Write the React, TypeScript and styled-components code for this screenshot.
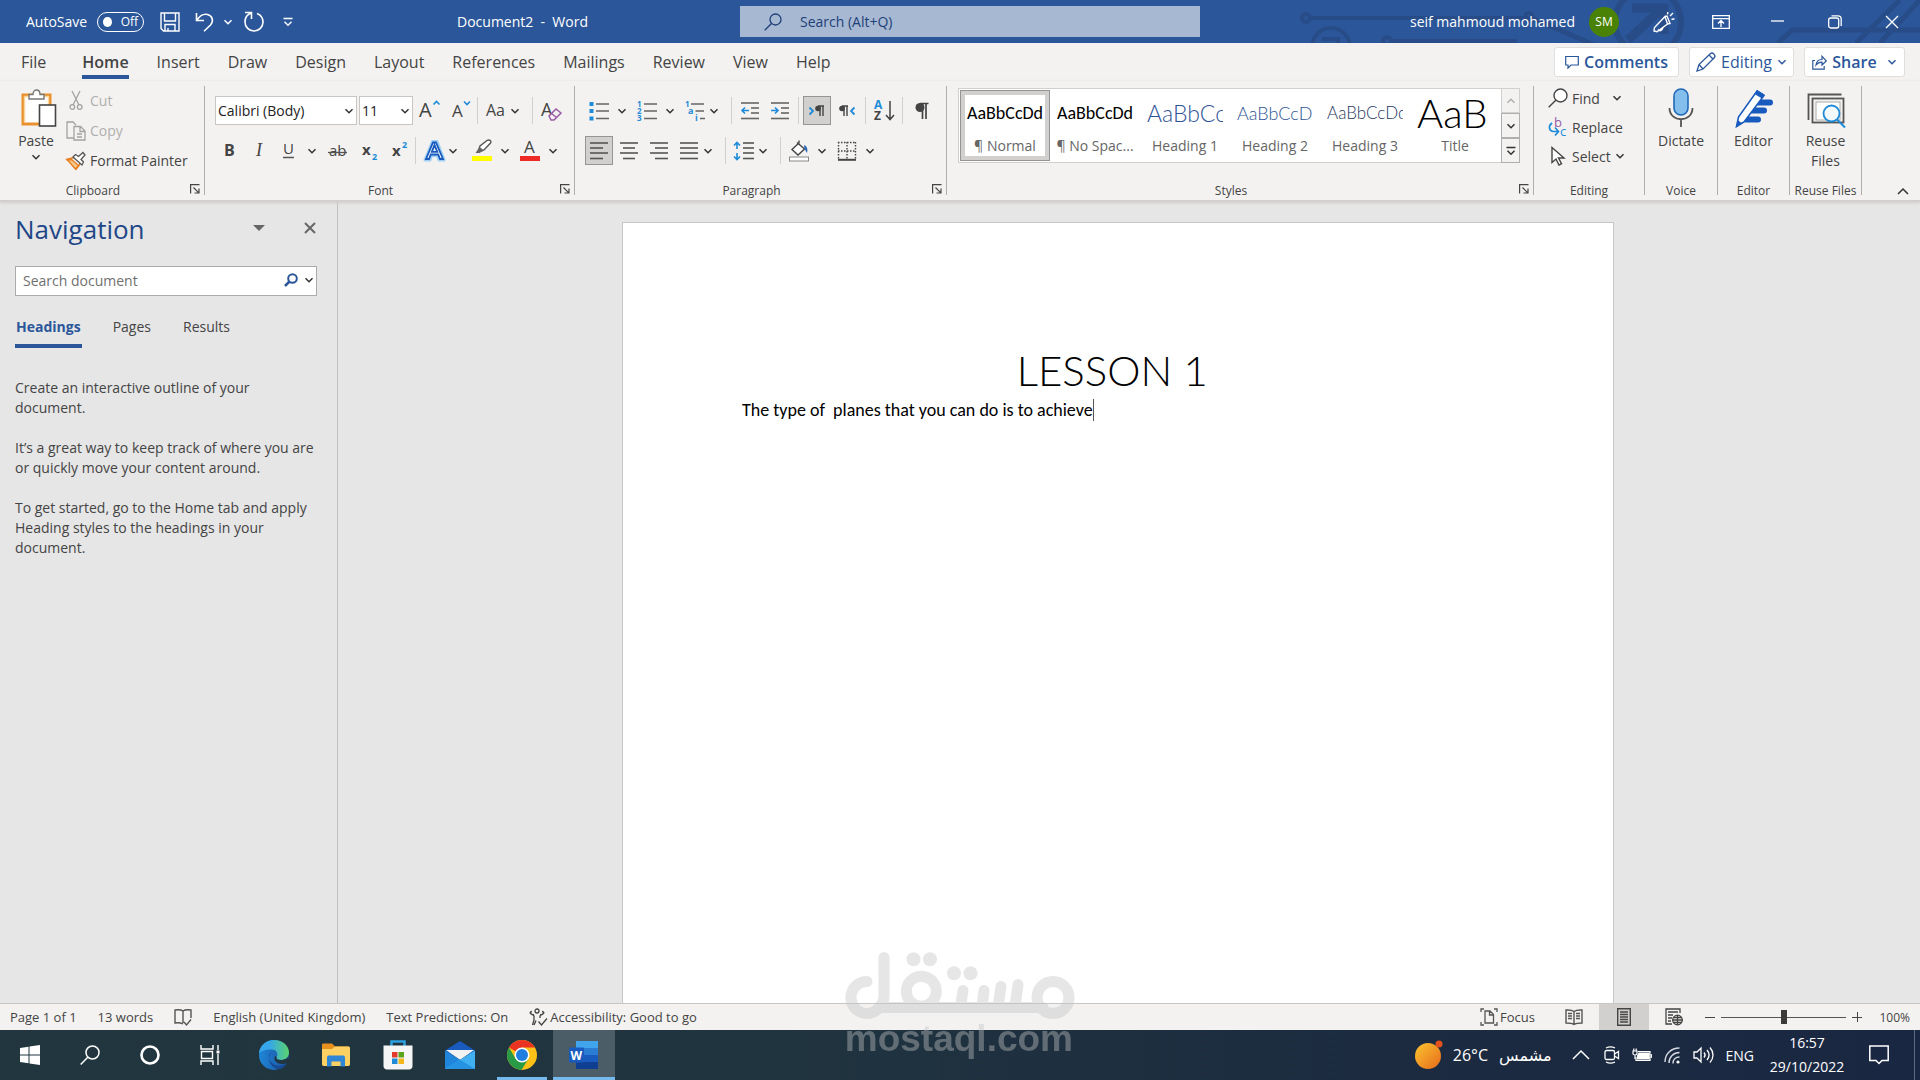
import React from "react";
import styled, { createGlobalStyle } from "styled-components";

const UI = `"Open Sans", "Noto Sans", sans-serif`;
const BODY = `Carlito, Lato, sans-serif`;
const DISPLAY = `Lato, Carlito, sans-serif`;
const C = {
  brand: "#2b579a",
  ribbon: "#f3f2f1",
  text: "#444444",
  blue: "#1e8bd8",
  canvas: "#e6e6e6",
  line: "#c6c6c6",
};

const Global = createGlobalStyle`
  *, *::before, *::after { box-sizing: border-box; }
  html, body, #root { height: 100%; margin: 0; }
  body { font-family: ${UI}; font-size: 14px; color: ${C.text}; overflow: hidden; }
  button, input, select { font: inherit; color: inherit; margin: 0; padding: 0; border: 0; background: none; outline: none; }
  svg { display: block; flex: none; overflow: visible; }
  p, h1, h2 { margin: 0; font-weight: 400; }
`;

const Window = styled.div`
  display: flex;
  flex-direction: column;
  height: 100vh;
  background: ${C.canvas};
`;

/* ---------- small drawings ---------- */

type IconProps = { w: number; h?: number; vb?: string; sw?: number; color?: string; children: React.ReactNode };
const Icon = ({ w, h = w, vb, sw = 1, color = "#555", children }: IconProps) => (
  <svg width={w} height={h} viewBox={vb || `0 0 ${w} ${h}`} fill="none" stroke={color} strokeWidth={sw} aria-hidden="true">
    {children}
  </svg>
);
const Chevron = ({ color = "#333", up = false }: { color?: string; up?: boolean }) => (
  <Icon w={10} h={6} color={color} sw={1.5}>
    <path d={up ? "M1.5 4.7 5 1.3l3.5 3.4" : "M1.5 1.2 5 4.7l3.5-3.5"} />
  </Icon>
);

/* ---------- title bar ---------- */

const TitleBar = styled.header`
  position: relative;
  display: grid;
  grid-template-columns: 37fr 23fr 36fr;
  align-items: center;
  height: 43px;
  flex: none;
  background: ${C.brand};
  color: #fff;
`;
const Circuit = styled.svg`
  position: absolute;
  top: 0;
  right: 0;
  overflow: hidden;
`;
const TitleLeft = styled.div`
  display: flex;
  align-items: center;
  padding: 0 152px 0 26px;
`;
const AutoSave = styled.label`
  display: flex;
  align-items: center;
  gap: 10px;
  margin-right: 8px;
`;
const Toggle = styled.button`
  display: flex;
  align-items: center;
  gap: 9px;
  width: 47px;
  height: 20px;
  padding: 0 5px;
  border: 1px solid #fff;
  border-radius: 10px;
  font-size: 12px;
`;
const Knob = styled.span`
  width: 10px;
  height: 10px;
  border-radius: 50%;
  background: #fff;
`;
const QuickButton = styled.button<{ $w: number }>`
  display: flex;
  justify-content: center;
  align-items: center;
  width: ${(p) => p.$w}px;
  height: 32px;
`;
const DocName = styled.div`
  margin-left: auto;
  white-space: pre;
`;
const SearchBox = styled.label`
  display: flex;
  align-items: center;
  gap: 18px;
  height: 31px;
  padding: 0 24px;
  background: #a6b8d2;
  input {
    flex: 1;
    min-width: 0;
    color: #1f3f77;
  }
  input::placeholder {
    color: #1f3f77;
    opacity: 1;
  }
`;
const TitleRight = styled.div`
  position: relative;
  display: flex;
  justify-content: flex-end;
  align-items: center;
`;
const Avatar = styled.span`
  display: grid;
  place-items: center;
  width: 30px;
  height: 30px;
  margin: 0 16px 0 14px;
  border-radius: 50%;
  background: #498205;
  font-size: 12px;
`;
const WindowButton = styled.button`
  display: grid;
  place-items: center;
  width: 57px;
  height: 43px;
`;

const Title = () => (
  <TitleBar>
    <Circuit width="660" height="43" viewBox="1260 0 660 43" fill="none" stroke="#284c88" strokeWidth="4" aria-hidden="true">
      <circle cx="1306" cy="18" r="4" />
      <path d="M1310 18h220l66 28" />
      <circle cx="1331" cy="47" r="19" />
      <path d="M1322 39h16v8" />
      <circle cx="1387" cy="41" r="4" />
      <path d="M1391 41h126" />
      <circle cx="1529" cy="17" r="4" />
      <path d="M1533 18l60 26" />
      <circle cx="1648" cy="22" r="33" strokeWidth="6" />
      <path d="M1628 40 1660 10M1632 8h32v26" strokeWidth="9" />
      <path d="M1778 43l14-13h128M1856 43l44-43M1880 43l40-43" strokeWidth="5" />
    </Circuit>
    <TitleLeft>
      <AutoSave htmlFor="autosave">
        AutoSave
        <Toggle id="autosave" type="button" role="switch" aria-checked="false">
          <Knob />
          Off
        </Toggle>
      </AutoSave>
      <QuickButton $w={36} aria-label="Save">
        <Icon w={20} color="#fff" sw={1.4}>
          <path d="M1 1h18v18H3.500L1 16.500zM4.500 1v8h11V1M5 19v-6.500h10V19M8 19v-3" />
        </Icon>
      </QuickButton>
      <QuickButton $w={34} aria-label="Undo">
        <Icon w={20} color="#fff" sw={1.6}>
          <path d="M1.500 1v7.500H9M2 8c3-4.500 6.500-6.500 10.500-5.500 5 1.300 6.500 6.500 3 10.500L9 19.300" />
        </Icon>
      </QuickButton>
      <QuickButton $w={12} aria-label="Undo list">
        <Chevron color="#fff" />
      </QuickButton>
      <QuickButton $w={40} aria-label="Redo">
        <Icon w={22} color="#fff" sw={1.6}>
          <path d="M2 1.500h6.500V8M8.300 2C4 3.500 2 7 2 11c0 5 4 9 9 9s9-4 9-9c0-4-2.200-7-6-8.500" />
        </Icon>
      </QuickButton>
      <QuickButton $w={28} aria-label="Customise toolbar">
        <Icon w={10} h={10} color="#fff" sw={1.4}>
          <path d="M.5 1.500h9M1.500 4.800 5 8.200l3.500-3.400" />
        </Icon>
      </QuickButton>
      <DocName>Document2  -  Word</DocName>
    </TitleLeft>
    <SearchBox>
      <Icon w={18} color="#1f3f77" sw={1.3}>
        <circle cx="11.500" cy="6.500" r="5.500" />
        <path d="M7.500 10.500.7 17.300" />
      </Icon>
      <input aria-label="Search" placeholder="Search (Alt+Q)" />
    </SearchBox>
    <TitleRight>
      seif mahmoud mohamed
      <Avatar>SM</Avatar>
      <WindowButton aria-label="Coming soon">
        <Icon w={22} color="#fff" sw={1.4}>
          <path d="M12 5.500 1.500 16.500 1 20l3 .8L14.500 13zM14.500 13 17 12.500 14 5 12 5.500M5 18.500c1.500 2 4 1.500 5-2M14.500 3.500l.3-2.500M17 5l3-3M18.500 8.500l3-.8" />
        </Icon>
      </WindowButton>
      <WindowButton aria-label="Ribbon display options">
        <Icon w={18} h={14} color="#fff" sw={1.3}>
          <path d="M.7.7h16.600v12.600H.7zM.7 3.700h16.600M9 12V6M6 8.500l3-3 3 3" />
        </Icon>
      </WindowButton>
      <WindowButton aria-label="Minimise">
        <Icon w={13} h={13} color="#fff" sw={1.3}>
          <path d="M0 6h13" />
        </Icon>
      </WindowButton>
      <WindowButton aria-label="Restore">
        <Icon w={14} color="#fff" sw={1.3}>
          <rect x=".7" y="3" width="10" height="10" rx="2" />
          <path d="M3.500.8H10c2 0 3.200 1.200 3.200 3.200V11" />
        </Icon>
      </WindowButton>
      <WindowButton aria-label="Close">
        <Icon w={14} color="#fff" sw={1.3}>
          <path d="M1 1l12 12M13 1 1 13" />
        </Icon>
      </WindowButton>
    </TitleRight>
  </TitleBar>
);

/* ---------- ribbon tabs ---------- */

const TabRow = styled.nav`
  display: flex;
  align-items: flex-start;
  height: 38px;
  flex: none;
  padding: 4px 15px 0 7px;
  background: ${C.ribbon};
`;
const Tab = styled.button<{ $active?: boolean }>`
  height: 32px;
  margin: 0 14px;
  padding-top: 2px;
  border-bottom: 4px solid ${(p) => (p.$active ? C.brand : "transparent")};
  font-size: 16px;
  line-height: 24px;
  font-weight: ${(p) => (p.$active ? 600 : 400)};
  &:first-child {
    margin-right: 22px;
  }
`;
const TabActions = styled.div`
  display: flex;
  gap: 10px;
  margin-left: auto;
`;
const ActionButton = styled.button<{ $w: number; $bold?: boolean }>`
  display: flex;
  justify-content: center;
  align-items: center;
  gap: 5px;
  width: ${(p) => p.$w}px;
  height: 30px;
  border: 1px solid #e1dfdd;
  border-radius: 3px;
  background: #fff;
  color: ${C.brand};
  font-size: 16px;
  font-weight: ${(p) => (p.$bold ? 600 : 400)};
`;
const tabs = ["File", "Home", "Insert", "Draw", "Design", "Layout", "References", "Mailings", "Review", "View", "Help"];

const Tabs = () => (
  <TabRow>
    {tabs.map((t) => (
      <Tab key={t} $active={t === "Home"}>
        {t}
      </Tab>
    ))}
    <TabActions>
      <ActionButton $w={125} $bold>
        <Icon w={14} color={C.brand} sw={1.2}>
          <path d="M.7 1.500h12.600v8.500H6L3 13v-3H.7z" />
        </Icon>
        Comments
      </ActionButton>
      <ActionButton $w={105}>
        <Icon w={20} color={C.brand} sw={1.3}>
          <path d="M1 19l2-6.500L14.500 1.500c2-1.500 5.500 1.500 4 4L7 17zM3 12.500 7 17M13 3l4.500 4.500" />
        </Icon>
        Editing
        <Chevron color={C.brand} />
      </ActionButton>
      <ActionButton $w={101} $bold>
        <Icon w={15} color={C.brand} sw={1.2}>
          <path d="M3 5.500H.8v8.700h11.400V11M4 10c.5-4 2.500-5.500 6-5.500V1.200L14.300 6 10 10V7.200C7.500 7.200 5.500 8 4 10z" />
        </Icon>
        Share
        <span />
        <Chevron color={C.brand} />
      </ActionButton>
    </TabActions>
  </TabRow>
);

/* ---------- ribbon body ---------- */

const Ribbon = styled.section`
  display: flex;
  flex: none;
  height: 121px;
  padding: 5px 0 5px;
  background: ${C.ribbon};
  border-bottom: 2px solid #d2d0ce;
  box-shadow: 0 1px 3px #cfcdcb;
  z-index: 1;
`;
const GroupBox = styled.div<{ $w?: number }>`
  display: flex;
  flex-direction: column;
  ${(p) => (p.$w ? `width: ${p.$w}px; flex: none;` : "flex: 1; min-width: 0;")}
  border-right: 1px solid #b1afad;
`;
const GroupMain = styled.div<{ $pad: string }>`
  flex: 1;
  min-height: 0;
  display: flex;
  padding: ${(p) => p.$pad};
`;
const GroupFoot = styled.div`
  display: flex;
  height: 16px;
  margin-bottom: -4px;
  font-size: 12px;
  line-height: 16px;
  white-space: nowrap;
  span {
    flex: 1;
    text-align: center;
  }
`;
const Launcher = styled.button`
  display: grid;
  place-items: center;
  width: 18px;
  height: 11px;
`;
const Group = ({ name, w, pad, launch, children }: { name: string; w?: number; pad: string; launch?: boolean; children: React.ReactNode }) => (
  <GroupBox $w={w}>
    <GroupMain $pad={pad}>{children}</GroupMain>
    <GroupFoot>
      <span>{name}</span>
      {launch && (
        <Launcher aria-label={`${name} settings`}>
          <Icon w={10} color="#444" sw={1.2}>
            <path d="M.6 9.500V.6h8.900M3.500 3.500 8.800 8.800M9 4.500V9H4.500" />
          </Icon>
        </Launcher>
      )}
    </GroupFoot>
  </GroupBox>
);

const BigButton = styled.button<{ $w: number }>`
  display: flex;
  flex-direction: column;
  align-items: center;
  gap: 3px;
  width: ${(p) => p.$w}px;
  line-height: 20px;
`;
const Column = styled.div<{ $row: number }>`
  display: flex;
  flex-direction: column;
  align-items: flex-start;
  button {
    height: ${(p) => p.$row}px;
  }
`;
const LineButton = styled.button`
  display: flex;
  align-items: center;
  gap: 4px;
  padding-bottom: 5px;
  white-space: nowrap;
  &:disabled {
    color: #b1afad;
  }
`;
const IconSlot = styled.span`
  display: grid;
  place-items: center;
  width: 20px;
`;
const Rows = styled.div`
  display: flex;
  flex-direction: column;
  gap: 11px;
`;
const Row = styled.div`
  display: flex;
  gap: 2px;
  height: 29px;
`;
const Tool = styled.button<{ $on?: boolean }>`
  display: grid;
  place-items: center;
  width: 28px;
  height: 29px;
  flex: none;
  border: 1px solid ${(p) => (p.$on ? "#979593" : "transparent")};
  background: ${(p) => (p.$on ? "#d2d0ce" : "transparent")};
`;
const Split = styled.div`
  display: flex;
`;
const Drop = styled.button<{ $tight?: boolean }>`
  display: flex;
  align-items: center;
  justify-content: ${(p) => (p.$tight ? "flex-start" : "center")};
  width: 18px;
`;
const Sep = styled.i`
  width: 1px;
  height: 27px;
  margin: 1px 2px;
  background: #d2d0ce;
`;
const Combo = styled.label<{ $w: number }>`
  display: flex;
  align-items: center;
  width: ${(p) => p.$w}px;
  padding: 0 2px 0 2px;
  border: 1px solid #c8c6c4;
  background: #fff;
  color: #222;
  select {
    flex: 1;
    min-width: 0;
    height: 27px;
    appearance: none;
  }
`;
const T = ({ x, y, s, f = "#444", b, i, children }: { x: number; y: number; s: number; f?: string; b?: boolean; i?: boolean; children: React.ReactNode }) => (
  <text x={x} y={y} fontSize={s} fill={f} stroke="none" fontWeight={b ? 700 : 400} fontStyle={i ? "italic" : "normal"} fontFamily={i ? "Liberation Serif, serif" : UI}>
    {children}
  </text>
);

const DropTool = ({ label, tight, children }: { label: string; tight?: boolean; children: React.ReactNode }) => (
  <Split>
    <Tool aria-label={label}>{children}</Tool>
    <Drop $tight={tight} aria-label={`${label} options`}>
      <Chevron />
    </Drop>
  </Split>
);

const lines = (segs: number[][]) => segs.map(([x1, x2, y], i) => <path key={i} d={`M${x1} ${y}H${x2}`} />);

const Clipboard = () => (
  <Group name="Clipboard" w={205} pad="2px 0 0 6px" launch>
    <BigButton $w={60}>
      <Icon w={36} h={40} sw={1.4} vb="-3 0 36 40">
        <rect x="2" y="7" width="27" height="29" fill="#fff" stroke="#e8912d" strokeWidth="3" />
        <path d="M3.500 8.500h24V34M3.500 8.500v26" stroke="#fbd59c" strokeWidth="1.500" />
        <path d="M8 11V6.500h4c0-6 7-6 7 0h4V11z" fill="#fff" stroke="#777" />
        <rect x="18.500" y="17" width="16" height="21" fill="#fff" stroke="#444" strokeWidth="1.600" />
      </Icon>
      Paste
      <Chevron />
    </BigButton>
    <Column $row={30}>
      <LineButton disabled>
        <IconSlot>
          <Icon w={14} h={21} color="#a5a3a1" sw={1.3}>
            <path d="M3 1l7 14M11 1 4 15" />
            <circle cx="3.300" cy="17" r="2.300" />
            <circle cx="10.700" cy="17" r="2.300" />
          </Icon>
        </IconSlot>
        Cut
      </LineButton>
      <LineButton disabled>
        <IconSlot>
          <Icon w={20} h={20} color="#a5a3a1" sw={1.3}>
            <path d="M8 17H1V1h6l3 3M8 5.500h6.500L19 10v9H8zM14 6v4.500h5M11 13h5M11 16h5" />
          </Icon>
        </IconSlot>
        Copy
      </LineButton>
      <LineButton>
        <IconSlot>
          <Icon w={20} h={20} color="#555" sw={1.3}>
            <path d="M8 6.500 1 8.500c1 1 2 1.500 3.500 1.500M4 11l6 7 5-6.500" stroke="#e67e22" strokeWidth="1.800" />
            <path d="M1.500 9 9.500 18l3-3.500-7-6z" fill="#f7c98b" stroke="#e67e22" />
            <path d="M7 6l9 8 1.500-3-2.500-2.500 4-4.500-2-2.500-4.500 4L9.500 3.500z" fill="#fff" />
          </Icon>
        </IconSlot>
        Format Painter
      </LineButton>
    </Column>
  </Group>
);

const FontGroup = () => (
  <Group name="Font" w={370} pad="10px 0 0 10px" launch>
    <Rows>
      <Row>
        <Combo $w={142}>
          <select aria-label="Font">
            <option>Calibri (Body)</option>
          </select>
          <Chevron />
        </Combo>
        <Combo $w={54}>
          <select aria-label="Font size">
            <option>11</option>
          </select>
          <Chevron />
        </Combo>
        <Tool aria-label="Grow font">
          <Icon w={20} h={22}>
            <T x={0} y={17} s={20}>A</T>
            <path d="M14.500 4.500 17.500 1.500l3 3" stroke={C.blue} strokeWidth="1.600" />
          </Icon>
        </Tool>
        <Tool aria-label="Shrink font">
          <Icon w={20} h={22}>
            <T x={3} y={17} s={17}>A</T>
            <path d="M15 1.500 18 4.500l3-3" stroke={C.blue} strokeWidth="1.600" />
          </Icon>
        </Tool>
        <Sep />
        <Split>
          <Tool aria-label="Change case">
            <Icon w={22} h={22}>
              <T x={1} y={16} s={16}>Aa</T>
            </Icon>
          </Tool>
          <Drop $tight aria-label="Change case options">
            <Chevron />
          </Drop>
        </Split>
        <Sep />
        <Tool aria-label="Clear formatting">
          <Icon w={22} h={22}>
            <T x={1} y={16} s={18}>A</T>
            <path d="M9 16l7-7 5 4-7 7h-3zM11.500 13.500l5 4" fill="#f3f2f1" stroke="#9a5ba5" strokeWidth="1.500" />
          </Icon>
        </Tool>
      </Row>
      <Row>
        <Tool aria-label="Bold">
          <Icon w={20} h={20}>
            <T x={5} y={15} s={16} b>B</T>
          </Icon>
        </Tool>
        <Tool aria-label="Italic">
          <Icon w={20} h={20}>
            <T x={7} y={15} s={18} i>I</T>
          </Icon>
        </Tool>
        <DropTool label="Underline">
          <Icon w={20} h={20}>
            <T x={4} y={13} s={15}>U</T>
            <path d="M4 16.500h11" strokeWidth="1.500" />
          </Icon>
        </DropTool>
        <Tool aria-label="Strikethrough">
          <Icon w={22} h={20}>
            <T x={3} y={15} s={15}>ab</T>
            <path d="M2 11.500h19" strokeWidth="1.300" />
          </Icon>
        </Tool>
        <Tool aria-label="Subscript">
          <Icon w={20} h={20}>
            <T x={5} y={14} s={15} b>x</T>
            <T x={15} y={19} s={9} f={C.blue} b>2</T>
          </Icon>
        </Tool>
        <Tool aria-label="Superscript">
          <Icon w={20} h={20}>
            <T x={5} y={15} s={15} b>x</T>
            <T x={15} y={7} s={9} f={C.blue} b>2</T>
          </Icon>
        </Tool>
        <Sep />
        <DropTool label="Text effects" tight>
          <svg width="20" height="22" viewBox="0 0 20 22">
            <path d="M1 20 8.500 1.500h4.500L20 20h-5l-1.500-4.500h-6L6 20z" fill="none" stroke="#9fd0f3" strokeWidth="3" strokeLinejoin="round" />
            <path d="M2 19 9 2.500h3L19 19h-3l-1.800-4.500H6.800L5 19zM7.800 11.800h5.500L10.500 5z" fill="#fff" stroke="#185abd" strokeWidth="1.800" />
          </svg>
        </DropTool>
        <DropTool label="Highlight colour">
          <Icon w={20} h={24}>
            <path d="M6 13 8 7 15 1.500c2-1.500 5 .5 3.500 2.500L12 11z" fill="#fff" strokeWidth="1.400" />
            <path d="M7.500 8l4.500 3.500L7.500 14H3.500z" fill="#666" stroke="none" />
            <path d="M0 19.500h20" stroke="#ffff00" strokeWidth="5" />
          </Icon>
        </DropTool>
        <DropTool label="Font colour">
          <Icon w={20} h={24}>
            <T x={4} y={14} s={17}>A</T>
            <path d="M0 19.500h20" stroke="#ee2a24" strokeWidth="5" />
          </Icon>
        </DropTool>
      </Row>
    </Rows>
  </Group>
);

const ListIcon = ({ kind }: { kind: "bullet" | "number" | "multi" }) => (
  <Icon w={20} h={20} sw={1.6} color="#666">
    {kind === "bullet" && (
      <>
        <path d="M7 3h13M7 10h13M7 17.500h13" />
        <path d="M.5 3h4M.5 10h4M.5 17.500h4" stroke={C.blue} strokeWidth="4" />
      </>
    )}
    {kind === "number" && (
      <>
        <path d="M7 3h13M7 10h13M7 17.500h13" />
        <T x={0} y={6} s={8} f={C.blue} b>1</T>
        <T x={0} y={13} s={8} f={C.blue} b>2</T>
        <T x={0} y={20} s={8} f={C.blue} b>3</T>
      </>
    )}
    {kind === "multi" && (
      <>
        <path d="M6 3h13M10.500 10H19M15 17.500h5" />
        <T x={0} y={6} s={8} f={C.blue} b>1</T>
        <T x={3} y={13} s={9} f={C.blue} b>a</T>
        <T x={10} y={20} s={9} f={C.blue} b>i</T>
      </>
    )}
  </Icon>
);

const Paragraph = () => (
  <Group name="Paragraph" w={372} pad="10px 0 0 10px" launch>
    <Rows>
      <Row>
        <DropTool label="Bullets"><ListIcon kind="bullet" /></DropTool>
        <DropTool label="Numbering"><ListIcon kind="number" /></DropTool>
        <DropTool label="Multilevel list" tight><ListIcon kind="multi" /></DropTool>
        <Sep />
        <Tool aria-label="Decrease indent">
          <Icon w={20} sw={1.6} color="#666">
            {lines([[1, 19, 2], [11, 19, 7], [11, 19, 12], [1, 19, 17.5]])}
            <path d="M9 9.500H2M5 6.500l-3 3 3 3" stroke={C.blue} />
          </Icon>
        </Tool>
        <Tool aria-label="Increase indent">
          <Icon w={20} sw={1.6} color="#666">
            {lines([[1, 19, 2], [11, 19, 7], [11, 19, 12], [1, 19, 17.5]])}
            <path d="M1 9.500h7M5 6.500l3 3-3 3" stroke={C.blue} />
          </Icon>
        </Tool>
        <Sep />
        <Tool $on aria-label="Left-to-right">
          <Icon w={18} h={14}>
            <path d="M1.500 3.500 5 7l-3.500 3.500" stroke={C.blue} strokeWidth="1.800" />
            <path d="M12 12V2M15 12V2M10 2h6" stroke="#444" strokeWidth="1.400" />
            <circle cx="10" cy="4.500" r="2.800" fill="#444" stroke="none" />
          </Icon>
        </Tool>
        <Tool aria-label="Right-to-left">
          <Icon w={18} h={14}>
            <path d="M16.500 3.500 13 7l3.500 3.500" stroke={C.blue} strokeWidth="1.800" />
            <path d="M6 12V2M9 12V2M4 2h6" stroke="#444" strokeWidth="1.400" />
            <circle cx="4" cy="4.500" r="2.800" fill="#444" stroke="none" />
          </Icon>
        </Tool>
        <Sep />
        <Tool aria-label="Sort">
          <Icon w={22} h={22}>
            <T x={1} y={9} s={12} f={C.blue} b>A</T>
            <T x={1} y={20} s={12} b>Z</T>
            <path d="M17 1v18M13 15l4 4.500 4-4.500" stroke="#444" strokeWidth="1.500" />
          </Icon>
        </Tool>
        <Sep />
        <Tool aria-label="Show marks">
          <Icon w={14} h={18}>
            <path d="M8.500 17V1.700M12 17V1.700M6 1.500h8.500" stroke="#444" strokeWidth="1.700" />
            <circle cx="6" cy="5.500" r="4.500" fill="#444" stroke="none" />
          </Icon>
        </Tool>
      </Row>
      <Row>
        <Tool $on aria-label="Align left">
          <Icon w={20} sw={1.6} color="#555">{lines([[1, 19, 2], [1, 14, 7], [1, 19, 12], [1, 14, 17.5]])}</Icon>
        </Tool>
        <Tool aria-label="Centre">
          <Icon w={20} sw={1.6} color="#555">{lines([[1, 19, 2], [4, 16, 7], [1, 19, 12], [4, 16, 17.5]])}</Icon>
        </Tool>
        <Tool aria-label="Align right">
          <Icon w={20} sw={1.6} color="#555">{lines([[1, 19, 2], [6, 19, 7], [1, 19, 12], [6, 19, 17.5]])}</Icon>
        </Tool>
        <DropTool label="Justify" tight>
          <Icon w={20} sw={1.6} color="#555">{lines([[1, 19, 2], [1, 19, 7], [1, 19, 12], [1, 19, 17.5]])}</Icon>
        </DropTool>
        <Sep />
        <DropTool label="Line spacing" tight>
          <Icon w={22} h={20} sw={1.6} color="#555">
            {lines([[10, 21, 2], [10, 21, 7], [10, 21, 12], [10, 21, 17.5]])}
            <path d="M4 1.500V8M1 4.500l3-3 3 3M4 18.500V12M1 15.500l3 3 3-3" stroke={C.blue} />
          </Icon>
        </DropTool>
        <Sep />
        <DropTool label="Shading">
          <Icon w={22} h={22} sw={1.4}>
            <path d="M9 2.500 16.500 9 10 15 4 9.500 11 3V.5" fill="#fff" stroke="#444" />
            <path d="M16 5c3 1 4 4 3 8l-2.500-4z" fill="#2b6cb8" stroke="none" />
            <rect x="1.500" y="17" width="19" height="4" fill="#fff" stroke="#888" strokeWidth="1" />
          </Icon>
        </DropTool>
        <DropTool label="Borders">
          <Icon w={20} h={20} color="#444">
            <path d="M1 1.500h18M1 10h18M1.500 1v17M10 1v17M18.500 1v17" strokeDasharray="1.500 1.500" strokeWidth="1.400" />
            <path d="M1 18.800h18" strokeWidth="2" />
          </Icon>
        </DropTool>
      </Row>
    </Rows>
  </Group>
);

const Gallery = styled.div`
  display: flex;
  flex: 1;
  min-width: 0;
  height: 75px;
  border: 1px solid #d2d0ce;
  background: #fff;
`;
const StyleItems = styled.div`
  display: grid;
  grid-template-columns: repeat(6, 1fr);
  flex: 1;
  min-width: 0;
  padding: 1px;
`;
const StyleCard = styled.button<{ $on?: boolean }>`
  display: flex;
  flex-direction: column;
  align-items: center;
  min-width: 0;
  height: 71px;
  padding: 0 4px;
  border: 1px solid ${(p) => (p.$on ? "#979593" : "transparent")};
  box-shadow: ${(p) => (p.$on ? "inset 0 0 0 4px #d2d0ce" : "none")};
  white-space: nowrap;
  line-height: 20px;
  color: #666;
`;
const Sample = styled.span<{ $size: number; $color: string; $light?: boolean }>`
  display: flex;
  align-items: center;
  justify-content: flex-start;
  width: 76px;
  height: 30px;
  margin: 7px 0 8px;
  overflow: hidden;
  font-family: ${(p) => (p.$light ? DISPLAY : BODY)};
  font-size: ${(p) => p.$size}px;
  font-weight: ${(p) => (p.$light ? 300 : 400)};
  line-height: 36px;
  color: ${(p) => p.$color};
`;
const Scroller = styled.div`
  display: grid;
  grid-template-rows: 1fr 1fr 1fr;
  width: 19px;
  margin: -1px -1px -1px 0;
  button {
    display: grid;
    place-items: center;
    border: 1px solid #b1afad;
    background: ${C.ribbon};
  }
  button:disabled {
    border-color: #d2d0ce;
  }
`;
const styleCards = [
  { name: "¶ Normal", text: "AaBbCcDd", size: 18, color: "#000" },
  { name: "¶ No Spac...", text: "AaBbCcDd", size: 18, color: "#000" },
  { name: "Heading 1", text: "AaBbCc", size: 23, color: "#2f5496", light: true },
  { name: "Heading 2", text: "AaBbCcD", size: 18, color: "#2f5496", light: true },
  { name: "Heading 3", text: "AaBbCcDd", size: 17, color: "#1f3763", light: true },
  { name: "Title", text: "AaB", size: 40, color: "#000", light: true },
];

const Styles = () => (
  <Group name="Styles" pad="2px 13px 0 11px" launch>
    <Gallery>
      <StyleItems>
        {styleCards.map((s) => (
          <StyleCard key={s.name} $on={s.name === "¶ Normal"}>
            <Sample $size={s.size} $color={s.color} $light={s.light}>{s.text}</Sample>
            {s.name}
          </StyleCard>
        ))}
      </StyleItems>
      <Scroller>
        <button disabled aria-label="Previous styles"><Chevron up color="#b1afad" /></button>
        <button aria-label="Next styles"><Chevron /></button>
        <button aria-label="More styles">
          <Icon w={10} h={10} color="#333" sw={1.5}>
            <path d="M.5 1.500h9M1.500 4.800 5 8.200l3.500-3.400" />
          </Icon>
        </button>
      </Scroller>
    </Gallery>
  </Group>
);

const Wide = styled.span`
  width: 4px;
`;

const Editing = () => (
  <Group name="Editing" w={111} pad="0 0 0 14px">
    <Column $row={29}>
      <LineButton>
        <IconSlot>
          <Icon w={20} color="#444" sw={1.4}>
            <circle cx="12.500" cy="7.500" r="6.500" fill="#fff" />
            <path d="M8 12 .7 19.300" />
          </Icon>
        </IconSlot>
        Find
        <Wide />
        <Chevron />
      </LineButton>
      <LineButton>
        <IconSlot>
          <Icon w={20}>
            <T x={6} y={10} s={13} f="#9a5ba5">b</T>
            <T x={12} y={19} s={13} f={C.blue}>c</T>
            <path d="M4 6c-4 3-3 8 1 8.500h5M7 10.500l3.500 4L7 18.500" stroke={C.blue} strokeWidth="1.700" />
          </Icon>
        </IconSlot>
        Replace
      </LineButton>
      <LineButton>
        <IconSlot>
          <Icon w={16} h={20} color="#444" sw={1.4}>
            <path d="M2 1.500v15l4-3.500 3 6 2.500-1.300-3-5.700H14z" fill="#fff" />
          </Icon>
        </IconSlot>
        Select
        <Chevron />
      </LineButton>
    </Column>
  </Group>
);

const MoreGroups = () => (
  <>
    <Group name="Voice" w={73} pad="2px 0 0">
      <BigButton $w={72}>
        <Icon w={26} h={40}>
          <rect x="6" y="1" width="14" height="26" rx="7" fill="#83beec" stroke="#2068b8" strokeWidth="1.600" />
          <path d="M1.500 20c0 15 23 15 23 0M13 31.500V39" stroke="#555" strokeWidth="1.800" />
        </Icon>
        Dictate
      </BigButton>
    </Group>
    <Group name="Editor" w={72} pad="2px 0 0">
      <BigButton $w={71}>
        <Icon w={40} h={40}>
          <path d="M21 14.500h15M17 22.500h13M12 31.500h12" stroke="#185abd" strokeWidth="6" strokeLinecap="round" />
          <path d="M23 3l7 4.500L10 34l-7.500 4.500L4.500 29z" fill="#fff" stroke="#185abd" strokeWidth="1.600" />
          <path d="M23 2l7.500 4.500L28 10.500 20.500 6zM2 39l1.500-7 5 3.500z" fill="#185abd" stroke="none" />
        </Icon>
        Editor
      </BigButton>
    </Group>
    <Group name="Reuse Files" w={72} pad="2px 0 0">
      <BigButton $w={71}>
        <Icon w={38} h={40}>
          <path d="M1.500 32V6.500h33" stroke="#555" strokeWidth="1.800" />
          <rect x="5.500" y="10.500" width="31" height="24" stroke="#555" strokeWidth="1.800" />
          <rect x="9" y="14" width="24" height="18" fill="#fff" stroke="#aaa" />
          <circle cx="24.500" cy="25.500" r="8" fill="#f3fafe" stroke={C.blue} strokeWidth="1.800" />
          <path d="M30 31.500l8 8" stroke={C.blue} strokeWidth="2" />
        </Icon>
        <span>
          Reuse
          <br />
          Files
        </span>
      </BigButton>
    </Group>
  </>
);

const Collapse = styled.button`
  display: flex;
  align-items: flex-end;
  justify-content: flex-end;
  width: 58px;
  padding: 0 11px 0 0;
`;

/* ---------- navigation pane ---------- */

const Workspace = styled.main`
  display: flex;
  flex: 1;
  min-height: 0;
`;
const NavPane = styled.aside`
  width: 338px;
  flex: none;
  padding: 9px 20px 0 15px;
  border-right: 1px solid #c0c0c0;
`;
const NavHead = styled.div`
  display: flex;
  height: 36px;
  padding-right: 1px;
  h2 {
    flex: 1;
    font-size: 26px;
    line-height: 36px;
    color: #1f4788;
  }
`;
const NavButton = styled.button`
  display: grid;
  place-items: center;
  width: 12px;
  height: 34px;
  margin-left: 39px;
`;
const NavSearch = styled.label`
  display: flex;
  align-items: center;
  gap: 6px;
  height: 30px;
  margin-top: 19px;
  padding: 0 2px 2px 7px;
  border: 1px solid #ababab;
  background: #fff;
  input {
    flex: 1;
    min-width: 0;
  }
  input::placeholder {
    color: #707070;
    opacity: 1;
  }
`;
const NavTabs = styled.div`
  display: flex;
  gap: 30px;
  margin-top: 21px;
`;
const NavTab = styled.button<{ $active?: boolean }>`
  height: 31px;
  padding: 0 1px 7px;
  border-bottom: 4px solid ${(p) => (p.$active ? C.brand : "transparent")};
  color: ${(p) => (p.$active ? C.brand : C.text)};
  font-weight: ${(p) => (p.$active ? 700 : 400)};
  line-height: 20px;
`;
const NavText = styled.div`
  display: flex;
  flex-direction: column;
  gap: 20px;
  margin-top: 30px;
  line-height: 20px;
`;

const Navigation = () => (
  <NavPane>
    <NavHead>
      <h2>Navigation</h2>
      <NavButton aria-label="Pane options">
        <Icon w={12} h={6}>
          <path d="M0 0h12L6 6z" fill="#666" stroke="none" />
        </Icon>
      </NavButton>
      <NavButton aria-label="Close pane">
        <Icon w={12} sw={2} color="#666">
          <path d="M1 1l10 10M11 1 1 11" />
        </Icon>
      </NavButton>
    </NavHead>
    <NavSearch>
      <input aria-label="Search document" placeholder="Search document" />
      <Icon w={14} sw={2} color={C.brand}>
        <circle cx="8.500" cy="5.500" r="4.300" />
        <path d="M5.500 8.500 1 13" strokeWidth="2.500" />
      </Icon>
      <Chevron />
    </NavSearch>
    <NavTabs>
      <NavTab $active>Headings</NavTab>
      <NavTab>Pages</NavTab>
      <NavTab>Results</NavTab>
    </NavTabs>
    <NavText>
      <p>Create an interactive outline of your document.</p>
      <p>It’s a great way to keep track of where you are or quickly move your content around.</p>
      <p>To get started, go to the Home tab and apply Heading styles to the headings in your document.</p>
    </NavText>
  </NavPane>
);

/* ---------- document ---------- */

const Canvas = styled.div`
  display: flex;
  justify-content: center;
  flex: 1;
  min-width: 0;
  padding: 20px 22px 0 0;
  overflow: hidden;
`;
const Page = styled.article`
  width: 992px;
  max-width: 100%;
  padding: 119px;
  border: 1px solid ${C.line};
  border-bottom: 0;
  background: #fff;
  color: #000;
  font-family: ${BODY};
  h1 {
    white-space: pre;
    text-align: center;
    font-family: ${DISPLAY};
    font-size: 42px;
    font-weight: 300;
    line-height: 56px;
  }
  p {
    display: flex;
    align-items: center;
    white-space: pre;
    font-size: 18px;
    line-height: 24px;
  }
`;
const Caret = styled.i`
  width: 1px;
  height: 22px;
  background: #555;
`;

/* ---------- status bar ---------- */

const StatusBar = styled.footer`
  display: flex;
  align-items: center;
  height: 27px;
  flex: none;
  padding: 0 10px;
  border-top: 1px solid ${C.line};
  background: ${C.ribbon};
  font-size: 13px;
  white-space: nowrap;
`;
const StatusGroup = styled.div<{ $right?: boolean }>`
  display: flex;
  align-items: center;
  gap: ${(p) => (p.$right ? 14 : 21)}px;
  margin-left: ${(p) => (p.$right ? "auto" : "0")};
`;
const StatusButton = styled.button`
  display: flex;
  align-items: center;
  gap: 2px;
`;
const Views = styled.div`
  display: flex;
`;
const ViewButton = styled.button<{ $on?: boolean }>`
  display: grid;
  place-items: center;
  width: 50px;
  height: 26px;
  background: ${(p) => (p.$on ? "#d2d0ce" : "transparent")};
`;
const Zoom = styled.div`
  display: flex;
  align-items: center;
  gap: 6px;
`;
const Range = styled.input`
  appearance: none;
  width: 125px;
  height: 16px;
  background: linear-gradient(#555, #555) center / 100% 1px no-repeat;
  &::-webkit-slider-thumb {
    appearance: none;
    width: 6px;
    height: 14px;
    background: #3b3a39;
  }
`;
const Percent = styled.button`
  width: 42px;
  font-size: 12px;
  text-align: right;
`;

const Status = () => (
  <StatusBar>
    <StatusGroup>
      <StatusButton>Page 1 of 1</StatusButton>
      <StatusButton>13 words</StatusButton>
      <StatusButton aria-label="Proofing">
        <Icon w={18} h={18} color="#555" sw={1.4}>
          <path d="M9 3v12M9 3C7 1.500 4 1.500 1 2v13c3-.5 5.500-.5 8 1M9 3c2-1.500 5-1.500 8-1v8M10 14l2.500 3L17 11.500" />
        </Icon>
      </StatusButton>
      <StatusButton>English (United Kingdom)</StatusButton>
      <StatusButton>Text Predictions: On</StatusButton>
      <StatusButton>
        <Icon w={19} h={18} color="#444" sw={1.3}>
          <circle cx="8" cy="3" r="2" />
          <path d="M1 4.500c0 2 4 2 4 3.500v4l-1.500 5M15 4.500c0 2-4 2-4 3.500v2M3 3.500C0 4 1 6 5 7M13 3.500C16 4 15 6 11 7M5 17l2-4.500M9.500 13.500 12.500 17 18 10.500" />
        </Icon>
        Accessibility: Good to go
      </StatusButton>
    </StatusGroup>
    <StatusGroup $right>
      <StatusButton>
        <Icon w={18} h={18} color="#555" sw={1.3}>
          <path d="M4 1H1v3M14 1h3v3M4 17H1v-3M14 17h3v-3" />
          <path d="M5 3h5l3.500 3.500V15H5zM9.500 3v4h4" />
        </Icon>
        Focus
      </StatusButton>
      <Zoom>
        <Views>
          <ViewButton aria-label="Read mode">
            <Icon w={18} h={16} color="#555" sw={1.4}>
              <path d="M9 2.500v13M9 2.500C7 1 4 .8 1 1v13c3 0 6 0 8 1.500 2-1.500 5-1.500 8-1.500V1c-3-.2-6 0-8 1.500M3 4.500h4M3 7h4M3 9.500h4M11 4.500h4M11 7h4M11 9.500h4" />
            </Icon>
          </ViewButton>
          <ViewButton $on aria-label="Print layout">
            <Icon w={14} h={18} color="#444" sw={1.4}>
              <path d="M.7.7h12.600v16.600H.7zM3 4h8M3 6.500h8M3 9h8M3 11.500h8M3 14h8" />
            </Icon>
          </ViewButton>
          <ViewButton aria-label="Web layout">
            <Icon w={18} h={18} color="#444" sw={1.3}>
              <path d="M7 16H1V1h14v4M3 4h10M3 7h5M3 10h4M3 13h3" />
              <circle cx="12.500" cy="12" r="4.800" />
              <path d="M7.500 12h10M12.500 7v10M9 9.500h7M9 14.500h7" />
            </Icon>
          </ViewButton>
        </Views>
        <StatusButton aria-label="Zoom out">
          <Icon w={10} color="#444"><path d="M0 5.500h10" /></Icon>
        </StatusButton>
        <Range type="range" aria-label="Zoom" min={0} max={100} defaultValue={50} />
        <StatusButton aria-label="Zoom in">
          <Icon w={10} color="#444"><path d="M0 5.500h10M5.500 0v10" /></Icon>
        </StatusButton>
        <Percent>100%</Percent>
      </Zoom>
    </StatusGroup>
  </StatusBar>
);

/* ---------- taskbar ---------- */

const TaskBar = styled.footer`
  display: flex;
  height: 50px;
  flex: none;
  background: linear-gradient(90deg, #21363f 0%, #20343f 40%, #1c2b40 72%, #1a2742 100%);
  color: #fff;
`;
const TaskButton = styled.button<{ $w: number; $open?: boolean; $active?: boolean }>`
  display: grid;
  place-items: center;
  width: ${(p) => p.$w}px;
  height: 50px;
  background: ${(p) => (p.$open ? `linear-gradient(#76b9ed, #76b9ed) center bottom / ${p.$active ? "100%" : "50px"} 3px no-repeat` : "none")};
  background-color: ${(p) => (p.$active ? "#4b5d66" : "transparent")};
`;
const Apps = styled.div`
  display: flex;
  padding-left: 3px;
`;
const Tray = styled.div`
  display: flex;
  align-items: center;
  margin-left: auto;
`;
const Weather = styled.button`
  display: flex;
  align-items: center;
  gap: 11px;
  margin-right: 20px;
  font-size: 16px;
  span {
    font-family: "Open Sans", "DejaVu Sans", sans-serif;
  }
`;
const TrayIcons = styled.div`
  display: flex;
  align-items: center;
  gap: 12px;
  margin-right: 8px;
`;
const TrayButton = styled.button`
  display: grid;
  place-items: center;
  height: 40px;
`;
const Clock = styled.button`
  width: 90px;
  line-height: 24px;
`;
const Notify = styled.button`
  display: grid;
  place-items: center;
  width: 54px;
  height: 50px;
  margin-right: 8px;
`;
const ShowDesktop = styled.button`
  width: 6px;
  height: 50px;
  border-left: 1px solid #5f6b7d;
`;

const Task = () => (
  <TaskBar>
    <TaskButton $w={60} aria-label="Start">
      <Icon w={20}>
        <path d="M0 3l8.500-1.200v7.700H0zM9.500 1.600 20 0v9.500H9.500zM0 10.500h8.500v7.700L0 17zM9.500 10.500H20V20L9.500 18.400z" fill="#fff" stroke="none" />
      </Icon>
    </TaskButton>
    <TaskButton $w={60} aria-label="Search">
      <Icon w={20} color="#fff" sw={1.5}>
        <circle cx="12.500" cy="7.500" r="6.500" />
        <path d="M8 12 .7 19.500" />
      </Icon>
    </TaskButton>
    <TaskButton $w={60} aria-label="Cortana">
      <Icon w={20} color="#fff" sw={2.6}><circle cx="10" cy="10" r="8.500" /></Icon>
    </TaskButton>
    <TaskButton $w={60} aria-label="Task view">
      <Icon w={20} color="#fff" sw={1.4}>
        <path d="M1 0v4h12V0M1 20v-4h12v4M1.500 6.500h11v7h-11zM18 0v5M18 9v11" />
        <path d="M16.500 7h3" strokeWidth="3" />
      </Icon>
    </TaskButton>
    <Apps>
      <TaskButton $w={62} aria-label="Edge">
        <svg width="30" height="30" viewBox="0 0 30 30">
          <defs>
            <linearGradient id="eg1" x1="0" x2="1"><stop offset=".35" stopColor="#35a7ea" /><stop offset="1" stopColor="#5ad36c" /></linearGradient>
            <linearGradient id="eg2" x1="0" x2="1"><stop offset="0" stopColor="#1f86d6" /><stop offset="1" stopColor="#1b4f9f" /></linearGradient>
          </defs>
          <circle cx="15" cy="15" r="15" fill="url(#eg2)" />
          <path d="M0 14C0 6 7 0 15 0c9 0 15 6 15 12.500 0 5-4 7.500-8 7.500-3.500 0-5-1.500-4.500-2.500 2-3 .5-8-5-8C6 9.500 1 11 0 14z" fill="url(#eg1)" />
          <path d="M12.500 12c-3 2-3.500 8 1 11.500 4 3 9 3 14.500-.5-2 3-4 5-6 6-9 1-15-9-9.500-17z" fill="#174a93" />
          <path d="M17.500 17.500c-.5 1.500 1 2.500 4.500 2.500 3 0 5.500-1 7-2.500l1.500 2.500c-1 2-2 3-2 3-5 2-12 1-13-4 0-3 1-4 2-1.500z" fill="#21363f" />
        </svg>
      </TaskButton>
      <TaskButton $w={62} aria-label="File Explorer">
        <svg width="28" height="24" viewBox="0 0 28 24">
          <path d="M0 2C0 1 .5.5 1.500.5H10l3 3h13c1 0 1.500.5 1.500 1.500V8H0z" fill="#e8911c" />
          <path d="M0 6h10l3-2.500h13c1 0 2 .5 2 1.500v16c0 1-.5 2-1.500 2h-25C.5 23 0 22 0 21z" fill="#fdd063" />
          <path d="M5 23.500v-9c0-1.500 1-2 2-2h14c1 0 2 .5 2 2v9h-4.500v-5h-9v5z" fill="#2f86d6" />
        </svg>
      </TaskButton>
      <TaskButton $w={62} aria-label="Microsoft Store">
        <svg width="30" height="30" viewBox="0 0 30 30">
          <path d="M8.500 7V1.500h13V7" fill="none" stroke="#2e9fe0" strokeWidth="2.500" />
          <path d="M.5 5.500h29V26c0 2-1.500 3.500-3.500 3.500H4C2 29.500.5 28 .5 26z" fill="#f5f5f5" />
          <path d="M9 12h5.500v5.500H9z" fill="#e23b2e" />
          <path d="M15.500 12H21v5.500h-5.500z" fill="#5aa51c" />
          <path d="M9 18.500h5.500V24H9z" fill="#1f8ad6" />
          <path d="M15.500 18.500H21V24h-5.500z" fill="#f4b61a" />
        </svg>
      </TaskButton>
      <TaskButton $w={62} aria-label="Mail">
        <svg width="30" height="28" viewBox="0 0 30 28">
          <path d="M0 9.500 15 0l15 9.500V14H0z" fill="#185abd" />
          <path d="M1 9h28L15 19z" fill="#f2f2f2" />
          <path d="M0 9.500 30 28H0z" fill="#1f86dc" />
          <path d="M30 9.500 0 28h30z" fill="#41b0f0" />
          <path d="M15 18.800 0 28h30z" fill="#2692e2" />
        </svg>
      </TaskButton>
      <TaskButton $w={62} $open aria-label="Chrome">
        <svg width="30" height="30" viewBox="0 0 30 30">
          <circle cx="15" cy="15" r="15" fill="#fbc116" />
          <path d="M15 15 2 7.500A15 15 0 0 1 28 7.500H15z" fill="#ea3323" />
          <path d="M2 7.500A15 15 0 0 0 14.500 30l7-11.500L15 15 8.500 18.500z" fill="#2a9a46" />
          <circle cx="15" cy="15" r="7.500" fill="#fff" />
          <circle cx="15" cy="15" r="6" fill="#1f7fe0" />
        </svg>
      </TaskButton>
      <TaskButton $w={62} $open $active aria-label="Word">
        <svg width="30" height="28" viewBox="0 0 30 28">
          <path d="M7 0h22v7H7z" fill="#41a5ee" />
          <path d="M7 7h22v7H7z" fill="#2b7cd3" />
          <path d="M7 14h22v7H7z" fill="#185abd" />
          <path d="M7 21h22v7H7z" fill="#103f91" />
          <rect x="0" y="6.500" width="15" height="15" rx="1" fill="#185abd" />
          <text x="1.500" y="18.500" fontSize="12" fontWeight="700" fontFamily={UI} fill="#fff">W</text>
        </svg>
      </TaskButton>
    </Apps>
    <Tray>
      <Weather>
        <svg width="27" height="30" viewBox="0 0 27 30">
          <defs>
            <linearGradient id="sun" x1="0" y1="0" x2="1" y2="1"><stop offset="0" stopColor="#fdc52f" /><stop offset="1" stopColor="#e56a1c" /></linearGradient>
          </defs>
          <circle cx="13" cy="16" r="13" fill="url(#sun)" />
          <circle cx="24" cy="4" r="3.500" fill="#e5501c" />
        </svg>
        26°C <span dir="rtl" lang="ar">مشمس</span>
      </Weather>
      <TrayIcons>
        <TrayButton aria-label="Hidden icons">
          <Icon w={18} h={10} color="#fff" sw={1.5}><path d="M1 9l8-8 8 8" /></Icon>
        </TrayButton>
        <TrayButton aria-label="Meet now">
          <Icon w={18} h={18} color="#fff" sw={1.3}>
            <rect x="3" y="4.500" width="9.500" height="9" rx="1.500" />
            <path d="M12.500 8 16.500 5.500v7L12.500 10M4 2c3-1.500 6-1.500 9 0M4 16c3 1.500 6 1.500 9 0" />
          </Icon>
        </TrayButton>
        <TrayButton aria-label="Battery">
          <Icon w={20} h={14} color="#fff" sw={1.2}>
            <path d="M6 3.500h12v9H4V9" />
            <path d="M7 5h10v6H5.500V8z" fill="#fff" />
            <path d="M19.300 6v4M1 3h4v2.500c0 2-4 2-4 0zM1.800 3V.5M4.200 3V.5M3 7v4" />
          </Icon>
        </TrayButton>
        <TrayButton aria-label="Network">
          <Icon w={17} h={17} color="#d5dae2" sw={1.4}>
            <path d="M1 15C1 7 7 1 15.500 1M5 16c0-6 4.500-10.500 10.500-10.500M9 16.500c0-4 2.500-6.500 6.500-6.500" />
            <circle cx="14" cy="15" r="1.600" fill="#fff" stroke="none" />
          </Icon>
        </TrayButton>
        <TrayButton aria-label="Volume">
          <Icon w={21} h={18} color="#fff" sw={1.3}>
            <path d="M1 6h3l4-4v14l-4-4H1zM11 6.500c1.300 1.500 1.300 3.500 0 5M14 4c2.500 3 2.500 7 0 10M17 1.500c4 4.500 4 10.500 0 15" />
          </Icon>
        </TrayButton>
        <TrayButton>ENG</TrayButton>
      </TrayIcons>
      <Clock>
        16:57
        <br />
        29/10/2022
      </Clock>
      <Notify aria-label="Notifications">
        <Icon w={20} h={20} color="#fff" sw={1.5}>
          <path d="M.8 1h18.400v14.500H13L10 18.500 7 15.500H.8z" />
        </Icon>
      </Notify>
      <ShowDesktop aria-label="Show desktop" />
    </Tray>
  </TaskBar>
);

/* ---------- watermark ---------- */

const Mark = styled.div`
  position: fixed;
  left: 44%;
  bottom: 22px;
  width: 230px;
  opacity: 0.41;
  color: #c3c3c3;
  font-family: "Liberation Sans", Arial, sans-serif;
  font-size: 37px;
  font-weight: 700;
  line-height: 38px;
  pointer-events: none;
  z-index: 2;
`;

const Watermark = () => (
  <Mark>
    <svg width="230" height="68" viewBox="0 0 230 68" fill="none" stroke="currentColor" strokeWidth="11" strokeLinecap="round">
      <path d="M22 29.500A16 16 0 1 0 36 53C38 50 39 48 39 45V5.500" />
      <path d="M34 55.500h164" />
      <circle cx="76.300" cy="39.300" r="15" />
      <circle cx="208" cy="45.500" r="16" />
      <path d="M118 38.500 115.500 55M139 38.500 137 55M156 34.500 153 55M173 32.500 170 55" />
      <g fill="currentColor" stroke="none">
        <circle cx="68.500" cy="7.300" r="7" />
        <circle cx="85" cy="7.300" r="7" />
        <circle cx="109" cy="21.300" r="7" />
        <circle cx="125.500" cy="21.300" r="7" />
      </g>
    </svg>
    mostaql.com
  </Mark>
);

export default function App() {
  return (
    <Window>
      <Global />
      <Title />
      <Tabs />
      <Ribbon>
        <Clipboard />
        <FontGroup />
        <Paragraph />
        <Styles />
        <Editing />
        <MoreGroups />
        <Collapse aria-label="Collapse ribbon">
          <Icon w={12} h={8} color="#333" sw={1.5}>
            <path d="M1 7l5-5 5 5" />
          </Icon>
        </Collapse>
      </Ribbon>
      <Workspace>
        <Navigation />
        <Canvas>
          <Page>
            <h1>LESSON 1 </h1>
            <p>
              {"The type of  planes that you can do is to achieve"}
              <Caret />
            </p>
          </Page>
        </Canvas>
      </Workspace>
      <Status />
      <Task />
      <Watermark />
    </Window>
  );
}
